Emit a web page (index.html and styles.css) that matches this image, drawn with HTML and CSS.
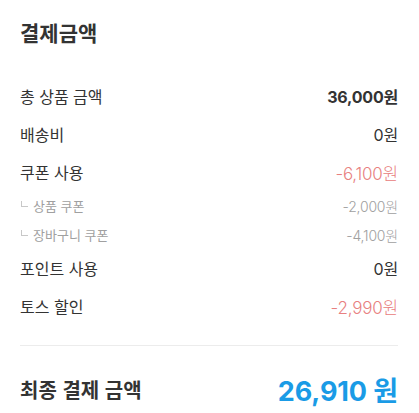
FILE: index.html
```html
<!DOCTYPE html>
<html lang="ko">
<head>
<meta charset="utf-8">
<link rel="stylesheet" href="styles.css">
</head>
<body>
<section class="summary">
  <h2 class="title">결제금액</h2>
  <ul class="rows">
    <li class="row"><span class="label">총 상품 금액</span><span class="value strong">36,000원</span></li>
    <li class="row"><span class="label">배송비</span><span class="value">0원</span></li>
    <li class="row"><span class="label">쿠폰 사용</span><span class="value red">-6,100원</span></li>
    <li class="row sub"><span class="label"><i class="corner"></i>상품 쿠폰</span><span class="value">-2,000원</span></li>
    <li class="row sub"><span class="label"><i class="corner"></i>장바구니 쿠폰</span><span class="value">-4,100원</span></li>
    <li class="row"><span class="label">포인트 사용</span><span class="value">0원</span></li>
    <li class="row"><span class="label">토스 할인</span><span class="value red">-2,990원</span></li>
  </ul>
  <div class="total">
    <span class="total-label">최종 결제 금액</span>
    <span class="total-value">26,910 원</span>
  </div>
</section>
</body>
</html>
```
FILE: styles.css
```css
* { box-sizing: border-box; }
html, body { margin: 0; padding: 0; background: #fff; }
body {
  font-family: "Noto Sans CJK KR", "Noto Sans", sans-serif;
  color: #333;
}
.summary {
  padding: 18px 21px 0 20px;
}
.title {
  margin: 0;
  font-size: 21px;
  line-height: 28px;
  font-weight: 700;
  color: #333;
}
.rows {
  list-style: none;
  margin: 31px 0 0;
  padding: 0;
}
.row {
  display: flex;
  justify-content: space-between;
  align-items: center;
  height: 38px;
  font-size: 16px;
}
.value {
  font-family: "Inter", "Noto Sans CJK KR", sans-serif;
  color: #333;
  letter-spacing: -0.2px;
}
.row .value.strong { font-weight: 700; }
.row .value.red { color: #e88080; font-weight: 300; font-size: 17px; }
.row.sub {
  height: 29px;
  font-size: 13px;
  color: #a0a0a0;
}
.row.sub .value { color: #a0a0a0; font-size: 14px; font-weight: 300; }
.row.sub .label { display: flex; align-items: center; }
.corner {
  display: inline-block;
  width: 7px;
  height: 6px;
  border-left: 1px solid #c8c8c8;
  border-bottom: 1px solid #c8c8c8;
  margin: 0 5px 4px 1px;
}
.total {
  margin-top: 20px;
  border-top: 1px solid #ececec;
  display: flex;
  justify-content: space-between;
  align-items: center;
  height: 88px;
}
.total-label {
  font-size: 20px;
  font-weight: 700;
  color: #333;
}
.total-value {
  font-family: "Inter", "Noto Sans CJK KR", sans-serif;
  font-size: 27px;
  font-weight: 700;
  color: #1a9be6;
  letter-spacing: -0.1px;
}
```
